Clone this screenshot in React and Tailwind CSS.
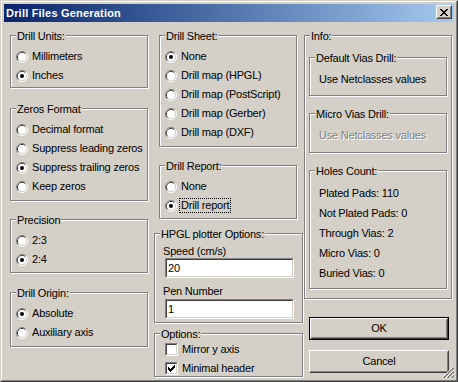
import React from 'react';

// classic 12px radio, drawn as two bevelled rings
const Radio = ({ checked }) => (
  <svg width="12" height="12" viewBox="0 0 12 12" className="shrink-0">
    <path d="M2.11 9.89 A5.5 5.5 0 0 1 9.89 2.11" fill="none" stroke="#808080" />
    <path d="M9.89 2.11 A5.5 5.5 0 0 1 2.11 9.89" fill="none" stroke="#fff" />
    <path d="M2.82 9.18 A4.5 4.5 0 0 1 9.18 2.82" fill="none" stroke="#404040" />
    <path d="M9.18 2.82 A4.5 4.5 0 0 1 2.82 9.18" fill="none" stroke="#d4d0c8" />
    <circle cx="6" cy="6" r="4" fill="#fff" />
    {checked && <circle cx="6" cy="6" r="2" fill="#000" />}
  </svg>
);

const Sunken = ({ className = '', children }) => (
  <div className={`shrink-0 border border-t-[#808080] border-l-[#808080] border-b-white border-r-white ${className}`}>
    <div className="h-full w-full border border-t-[#404040] border-l-[#404040] border-b-[#d4d0c8] border-r-[#d4d0c8] bg-white">
      {children}
    </div>
  </div>
);

const CheckMark = () => (
  <svg width="9" height="9" viewBox="0 0 9 9" shapeRendering="crispEdges">
    {[2, 3, 4, 3, 2, 1, 0].map((y, i) => (
      <rect key={i} x={i + 1} y={y + 1} width="1" height="3" fill="#000" />
    ))}
  </svg>
);

const RadioRow = ({ label, checked, focused }) => (
  <div className="flex h-[19px] items-center gap-[4px] pl-[5px]">
    <Radio checked={checked} />
    {focused ? (
      <span className="-ml-[2px] h-[15px] border border-dotted border-black px-[1px] leading-[13px]">{label}</span>
    ) : (
      <span>{label}</span>
    )}
  </div>
);

const CheckRow = ({ label, checked }) => (
  <div className="flex h-[19px] items-center gap-[4px]">
    <Sunken className="h-[13px] w-[13px]">{checked && <CheckMark />}</Sunken>
    <span>{label}</span>
  </div>
);

const Group = ({ title, className = '', children }) => (
  <div className={`shrink-0 border border-[#808080] shadow-[1px_1px_0_#fff,inset_1px_1px_0_#fff] ${className}`}>
    <div className="-mt-[6px] ml-[5px] h-[13px] w-fit bg-[#d4d0c8] px-[1px] leading-[13px]">{title}</div>
    {children}
  </div>
);

const Button = ({ label, isDefault }) => (
  <div className={`ml-[5px] h-[23px] w-[140px] shrink-0 ${isDefault ? 'border border-black' : ''}`}>
    <div className="h-full border border-t-white border-l-white border-b-[#404040] border-r-[#404040]">
      <div className="flex h-full items-center justify-center border border-t-[#d4d0c8] border-l-[#d4d0c8] border-b-[#808080] border-r-[#808080]">
        {label}
      </div>
    </div>
  </div>
);

const CloseGlyph = () => (
  <svg width="8" height="7" viewBox="0 0 8 7" shapeRendering="crispEdges">
    {[
      [0, 6], [1, 5], [2, 4], [3, 3], [2, 4], [1, 5], [0, 6],
    ].map(([a, b], y) => (
      <g key={y} fill="#000">
        <rect x={a} y={y} width="2" height="1" />
        <rect x={b} y={y} width="2" height="1" />
      </g>
    ))}
  </svg>
);

const TitleBar = () => (
  <div className="flex h-[18px] shrink-0 items-start justify-between bg-linear-to-r from-[#0a246a] to-[#a6caf0] pl-[2px] pr-[2px]">
    <span className="self-center text-[11px] font-bold tracking-[0.2px] text-white">Drill Files Generation</span>
    <div className="mt-[1px] h-[14px] w-[16px] border border-t-white border-l-white border-b-[#404040] border-r-[#404040] bg-[#d4d0c8]">
      <div className="flex h-full items-center justify-center border border-t-[#d4d0c8] border-l-[#d4d0c8] border-b-[#808080] border-r-[#808080]">
        <CloseGlyph />
      </div>
    </div>
  </div>
);

const Grip = () => (
  <svg width="12" height="12" viewBox="0 0 12 12" className="absolute bottom-[3px] right-[3px]">
    {[0, 4, 8].map((k) => (
      <g key={k}>
        <line x1="12" y1={k} x2={k} y2="12" stroke="#fff" />
        <line x1="12" y1={k + 1} x2={k + 1} y2="12" stroke="#808080" />
        <line x1="12" y1={k + 2} x2={k + 2} y2="12" stroke="#808080" />
      </g>
    ))}
  </svg>
);

export default function App() {
  return (
    <div className="relative h-[382px] w-[458px] border border-t-[#d4d0c8] border-l-[#d4d0c8] border-b-[#404040] border-r-[#404040] bg-[#d4d0c8] font-['Liberation_Sans',Arial,sans-serif] text-[11px] tracking-[-0.2px] text-black">
      <div className="flex h-full flex-col border border-t-white border-l-white border-b-[#808080] border-r-[#808080] p-[2px]">
        <TitleBar />

        <div className="flex flex-1 pl-[6px] pt-[13px]">
          {/* left column */}
          <div className="flex w-[138px] flex-col">
            <Group title="Drill Units:" className="h-[53px]">
              <div className="pt-[4px]">
                <RadioRow label="Millimeters" />
                <RadioRow label="Inches" checked />
              </div>
            </Group>
            <Group title="Zeros Format" className="mt-[20px] h-[93px]">
              <div className="pt-[4px]">
                <RadioRow label="Decimal format" />
                <RadioRow label="Suppress leading zeros" />
                <RadioRow label="Suppress trailing zeros" checked />
                <RadioRow label="Keep zeros" />
              </div>
            </Group>
            <Group title="Precision" className="mt-[18px] h-[54px]">
              <div className="pt-[4px]">
                <RadioRow label="2:3" />
                <RadioRow label="2:4" checked />
              </div>
            </Group>
            <Group title="Drill Origin:" className="mt-[19px] h-[55px]">
              <div className="pt-[4px]">
                <RadioRow label="Absolute" checked />
                <RadioRow label="Auxiliary axis" />
              </div>
            </Group>
          </div>

          {/* middle column */}
          <div className="ml-[6px] flex w-[149px] flex-col">
            <Group title="Drill Sheet:" className="ml-[5px] h-[112px] w-[138px]">
              <div className="pt-[4px]">
                <RadioRow label="None" checked />
                <RadioRow label="Drill map (HPGL)" />
                <RadioRow label="Drill map (PostScript)" />
                <RadioRow label="Drill map (Gerber)" />
                <RadioRow label="Drill map (DXF)" />
              </div>
            </Group>
            <Group title="Drill Report:" className="ml-[5px] mt-[18px] h-[54px] w-[138px]">
              <div className="pt-[4px]">
                <RadioRow label="None" />
                <RadioRow label="Drill report" checked focused />
              </div>
            </Group>
            <Group title="HPGL plotter Options:" className="mt-[14px] h-[90px]">
              <div className="flex flex-col pl-[8px]">
                <div className="mt-[4px] h-[13px] leading-[13px]">Speed (cm/s)</div>
                <Sunken className="ml-[2px] h-[20px] w-[129px]">
                  <div className="pl-[1px] leading-[16px]">20</div>
                </Sunken>
                <div className="mt-[7px] h-[13px] leading-[13px]">Pen Number</div>
                <Sunken className="ml-[2px] mt-[1px] h-[20px] w-[129px]">
                  <div className="pl-[1px] leading-[16px]">1</div>
                </Sunken>
              </div>
            </Group>
            <Group title="Options:" className="mt-[10px] h-[44px]">
              <div className="-mt-[1px] pl-[10px]">
                <CheckRow label="Mirror y axis" />
                <CheckRow label="Minimal header" checked />
              </div>
            </Group>
          </div>

          {/* right column */}
          <div className="ml-[1px] flex w-[148px] flex-col">
            <Group title="Info:" className="h-[264px]">
              <div className="flex flex-col pl-[4px]">
                <Group title="Default Vias Drill:" className="mt-[14px] h-[39px] w-[138px]">
                  <div className="flex h-[19px] items-center pl-[9px] mt-[5px]">Use Netclasses values</div>
                </Group>
                <Group title="Micro Vias Drill:" className="mt-[17px] h-[40px] w-[138px]">
                  <div className="mt-[5px] flex h-[19px] items-center pl-[9px] text-[#808080] [text-shadow:1px_1px_0_#fff]">
                    Use Netclasses values
                  </div>
                </Group>
                <Group title="Holes Count:" className="mt-[17px] h-[119px] w-[138px]">
                  <div className="pl-[9px] pt-[5px]">
                    {['Plated Pads: 110', 'Not Plated Pads: 0', 'Through Vias: 2', 'Micro Vias: 0', 'Buried Vias: 0'].map((t) => (
                      <div key={t} className="flex h-[20px] items-center">{t}</div>
                    ))}
                  </div>
                </Group>
              </div>
            </Group>
            <div className="mt-[18px]">
              <Button label="OK" isDefault />
            </div>
            <div className="mt-[10px]">
              <Button label="Cancel" />
            </div>
          </div>
        </div>
      </div>
      <Grip />
    </div>
  );
}
